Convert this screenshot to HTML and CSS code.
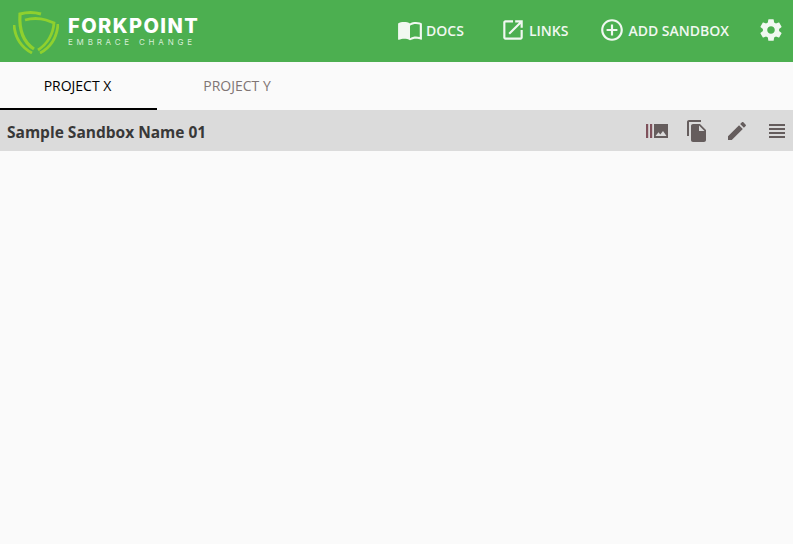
FILE: index.html
```html
<!DOCTYPE html>
<html lang="en">
<head>
    <meta charset="UTF-8">
    <meta name="viewport" content="width=device-width, initial-scale=1.0">
    <title>Forkpoint</title>
    <link rel="stylesheet" href="styles.css">
</head>
<body>
    <div class="navbar">
        <div class="logo">
            <svg class="logo-mark" width="46" height="46" viewBox="13 7 46 46" fill="none" stroke="#8fd02e" stroke-width="2.8">
                <path stroke-width="3.2" d="M41 13 C34 11 27 11 20 13 C19 28 23 41 34 48"/>
                <path d="M14 24 C15 36 21 46 32 52"/>
                <path d="M25 19 C32 17 39 17 46 19 L54 22 C53 34 47 43 38 49"/>
                <path d="M58 23 C57 36 51 46 40 52"/>
            </svg>
            <div class="logo-text">
                <div class="logo-name">FORKPOINT</div>
                <div class="logo-tag">EMBRACE CHANGE</div>
            </div>
        </div>
        <a class="nav-link docs" href="#">
            <svg width="26" height="26" viewBox="0 0 24 24"><path d="M21 5c-1.11-.35-2.33-.5-3.5-.5-1.95 0-4.05.4-5.5 1.5-1.45-1.1-3.55-1.5-5.5-1.5S2.45 4.9 1 6v14.65c0 .25.25.5.5.5.1 0 .15-.05.25-.05C3.1 20.45 5.05 20 6.5 20c1.95 0 4.05.4 5.5 1.5 1.35-.85 3.8-1.5 5.5-1.5 1.65 0 3.35.3 4.75 1.05.1.05.15.05.25.05.25 0 .5-.25.5-.5V6c-.6-.45-1.25-.75-2-1zm0 13.5c-1.1-.35-2.3-.5-3.5-.5-1.7 0-4.15.65-5.5 1.5V8c1.35-.85 3.8-1.5 5.5-1.5 1.2 0 2.4.15 3.5.5v11.5z"/></svg>
            DOCS
        </a>
        <a class="nav-link links" href="#">
            <svg width="26" height="26" viewBox="0 0 24 24"><path d="M19 19H5V5h7V3H5c-1.11 0-2 .9-2 2v14c0 1.1.89 2 2 2h14c1.1 0 2-.9 2-2v-7h-2v7zM14 3v2h3.59l-9.83 9.83 1.41 1.41L19 6.41V10h2V3h-7z"/></svg>
            LINKS
        </a>
        <a class="nav-link add" href="#">
            <svg width="26" height="26" viewBox="0 0 24 24"><path d="M13 7h-2v4H7v2h4v4h2v-4h4v-2h-4V7zm-1-5C6.48 2 2 6.48 2 12s4.48 10 10 10 10-4.48 10-10S17.52 2 12 2zm0 18c-4.41 0-8-3.59-8-8s3.59-8 8-8 8 3.59 8 8-3.59 8-8 8z"/></svg>
            ADD SANDBOX
        </a>
        <a class="nav-link gear" href="#">
            <svg width="26" height="26" viewBox="0 0 24 24"><path d="M19.43 12.98c.04-.32.07-.64.07-.98s-.03-.66-.07-.98l2.11-1.65c.19-.15.24-.42.12-.64l-2-3.46c-.12-.22-.39-.3-.61-.22l-2.49 1c-.52-.4-1.08-.73-1.69-.98l-.38-2.65C14.46 2.18 14.25 2 14 2h-4c-.25 0-.46.18-.49.42l-.38 2.65c-.61.25-1.17.59-1.69.98l-2.49-1c-.23-.09-.49 0-.61.22l-2 3.46c-.13.22-.07.49.12.64l2.11 1.65c-.04.32-.07.65-.07.98s.03.66.07.98l-2.11 1.65c-.19.15-.24.42-.12.64l2 3.46c.12.22.39.3.61.22l2.49-1c.52.4 1.08.73 1.69.98l.38 2.65c.03.24.24.42.49.42h4c.25 0 .46-.18.49-.42l.38-2.65c.61-.25 1.17-.59 1.69-.98l2.49 1c.23.09.49 0 .61-.22l2-3.46c.12-.22.07-.49-.12-.64l-2.11-1.65zM12 15.5c-1.93 0-3.5-1.57-3.5-3.5s1.57-3.5 3.5-3.5 3.5 1.57 3.5 3.5-1.57 3.5-3.5 3.5z"/></svg>
        </a>
    </div>

    <div class="tabs">
        <a class="tab active" href="#">PROJECT X</a>
        <a class="tab" href="#">PROJECT Y</a>
    </div>

    <div class="toolbar">
        <span class="sandbox-name">Sample Sandbox Name 01</span>
        <div class="tools">
            <svg width="24" height="24" viewBox="0 0 24 24">
                <path fill="#7f525c" d="M1 5h2.2v14H1zM5 5h2.2v14H5z"/>
                <path d="M9 5h14v14H9zM10.5 17h11l-3.5-5-2.7 3.4-1.8-2.1z" fill-rule="evenodd"/>
            </svg>
            <svg width="24" height="24" viewBox="0 0 24 24"><path d="M16 1H4c-1.1 0-2 .9-2 2v14h2V3h12V1zm-1 4l6 6v10c0 1.1-.9 2-2 2H7.99C6.89 23 6 22.1 6 21l.01-14c0-1.1.89-2 1.99-2h7zm-1 7h5.5L14 6.5V12z"/></svg>
            <svg width="24" height="24" viewBox="0 0 24 24"><path d="M3 17.25V21h3.75L17.81 9.94l-3.75-3.75L3 17.25zM20.71 7.04c.39-.39.39-1.02 0-1.41l-2.34-2.34c-.39-.39-1.02-.39-1.41 0l-1.83 1.83 3.75 3.75 1.83-1.83z"/></svg>
            <svg width="24" height="24" viewBox="0 0 24 24"><path d="M4 15h16v-2H4v2zm0 4h16v-2H4v2zm0-8h16V9H4v2zm0-6v2h16V5H4z"/></svg>
        </div>
    </div>
</body>
</html>
```

FILE: styles.css
```css
body {
    margin: 0;
    min-height: 544px;
    background-color: #fafafa;
    font-family: "Open Sans", sans-serif;
}
a {
    text-decoration: none;
}
.navbar {
    display: flex;
    align-items: center;
    box-sizing: border-box;
    height: 62px;
    padding-bottom: 2px;
    background-color: #4caf50;
}
.logo {
    display: flex;
    align-items: center;
    flex: 1;
    padding-left: 13px;
}
.logo-mark {
    margin-top: 2px;
    margin-right: 9px;
}
.logo-text {
    padding-top: 2px;
    color: #fff;
}
.logo-name {
    font-family: Inter, sans-serif;
    font-size: 20px;
    font-weight: 800;
    line-height: 21px;
    letter-spacing: 1.45px;
}
.logo-tag {
    font-family: Inter, sans-serif;
    font-size: 8px;
    line-height: 10px;
    letter-spacing: 3.8px;
    color: #d6eed7;
}
.nav-link {
    display: flex;
    align-items: center;
    gap: 3px;
    font-size: 14px;
    font-weight: 600;
    color: #f1f8f1;
}
.nav-link svg {
    fill: #f1f8f1;
}
.docs {
    margin-right: 36px;
}
.links {
    margin-right: 31px;
}
.add {
    margin-right: 29px;
}
.gear {
    margin-right: 9px;
}
.tabs {
    display: flex;
    height: 48px;
}
.tab {
    box-sizing: border-box;
    width: 157px;
    height: 48px;
    line-height: 48px;
    text-align: center;
    font-size: 14px;
    color: #7f7574;
}
.tab.active {
    padding-right: 2px;
    color: #000;
    border-bottom: 2px solid #000;
}
.tab + .tab {
    padding-left: 3px;
}
.toolbar {
    display: flex;
    align-items: center;
    justify-content: space-between;
    height: 41px;
    padding: 0 4px 0 7px;
    background-color: #dbdbdb;
}
.sandbox-name {
    padding-top: 2px;
    font-size: 15.5px;
    font-weight: 700;
    color: #383838;
}
.tools {
    display: flex;
    gap: 16px;
}
.tools svg {
    fill: #655d5d;
}
```
